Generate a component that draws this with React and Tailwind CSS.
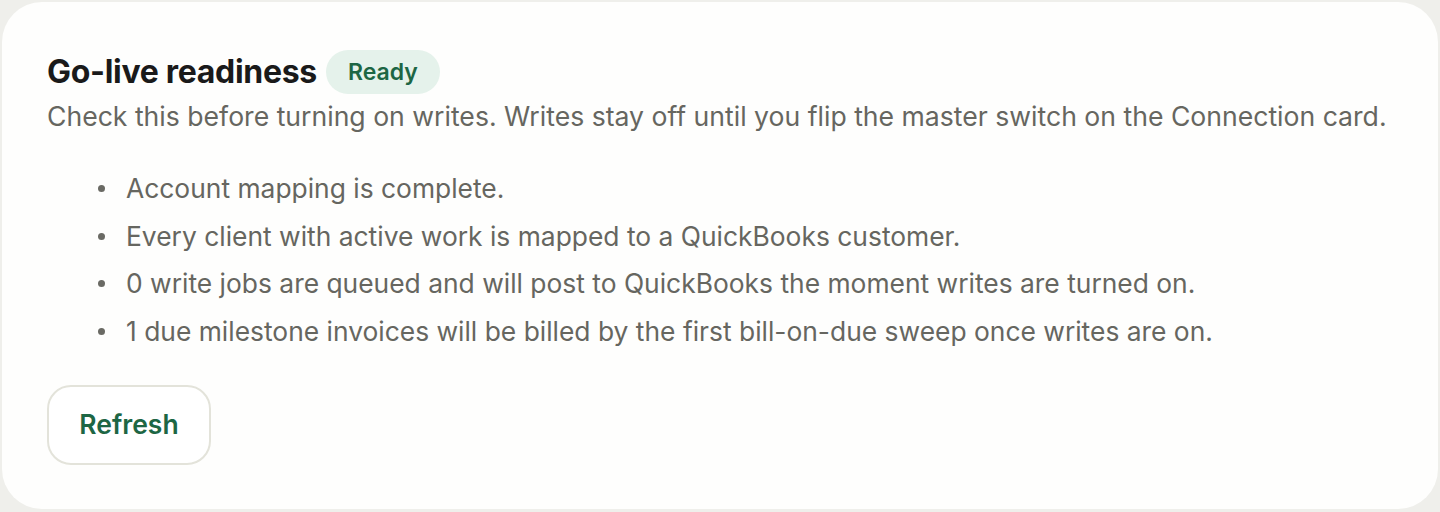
import React from "react";

const items = [
  "Account mapping is complete.",
  "Every client with active work is mapped to a QuickBooks customer.",
  "0 write jobs are queued and will post to QuickBooks the moment writes are turned on.",
  "1 due milestone invoices will be billed by the first bill-on-due sweep once writes are on.",
];

export default function App() {
  return (
    <div
      className="min-h-[512px] bg-[#efefeb] p-[2px]"
      style={{ fontFamily: "Inter, 'Noto Sans', sans-serif" }}
    >
      <section className="h-[507px] rounded-[40px] bg-[#fefefd] px-[45px] pt-[46px]">
        <div className="flex items-center gap-[9px]">
          <h2 className="text-[32px] font-bold tracking-[-0.3px] text-[#1a1a1a]">
            Go-live readiness
          </h2>
          <span className="flex h-[44px] items-center rounded-full bg-[#e5f2eb] px-[22px] text-[23px] font-semibold text-[#1d6644]">
            Ready
          </span>
        </div>
        <p className="mt-[2px] text-[26.6px] leading-[36px] text-[#666660]">
          Check this before turning on writes. Writes stay off until you flip the master switch on the Connection card.
        </p>
        <ul className="mt-[31px] flex flex-col text-[26.4px] leading-[47.5px] text-[#666660]">
          {items.map((t) => (
            <li key={t} className="flex items-center">
              <span className="ml-[51px] mr-[21px] h-[7px] w-[7px] rounded-full bg-[#6a6a64]" />
              {t}
            </li>
          ))}
        </ul>
        <button className="mt-[30px] h-[80px] w-[164px] rounded-[24px] border-2 border-[#e3e3da] bg-white text-[26.5px] font-semibold text-[#1d6644]">
          Refresh
        </button>
      </section>
    </div>
  );
}
